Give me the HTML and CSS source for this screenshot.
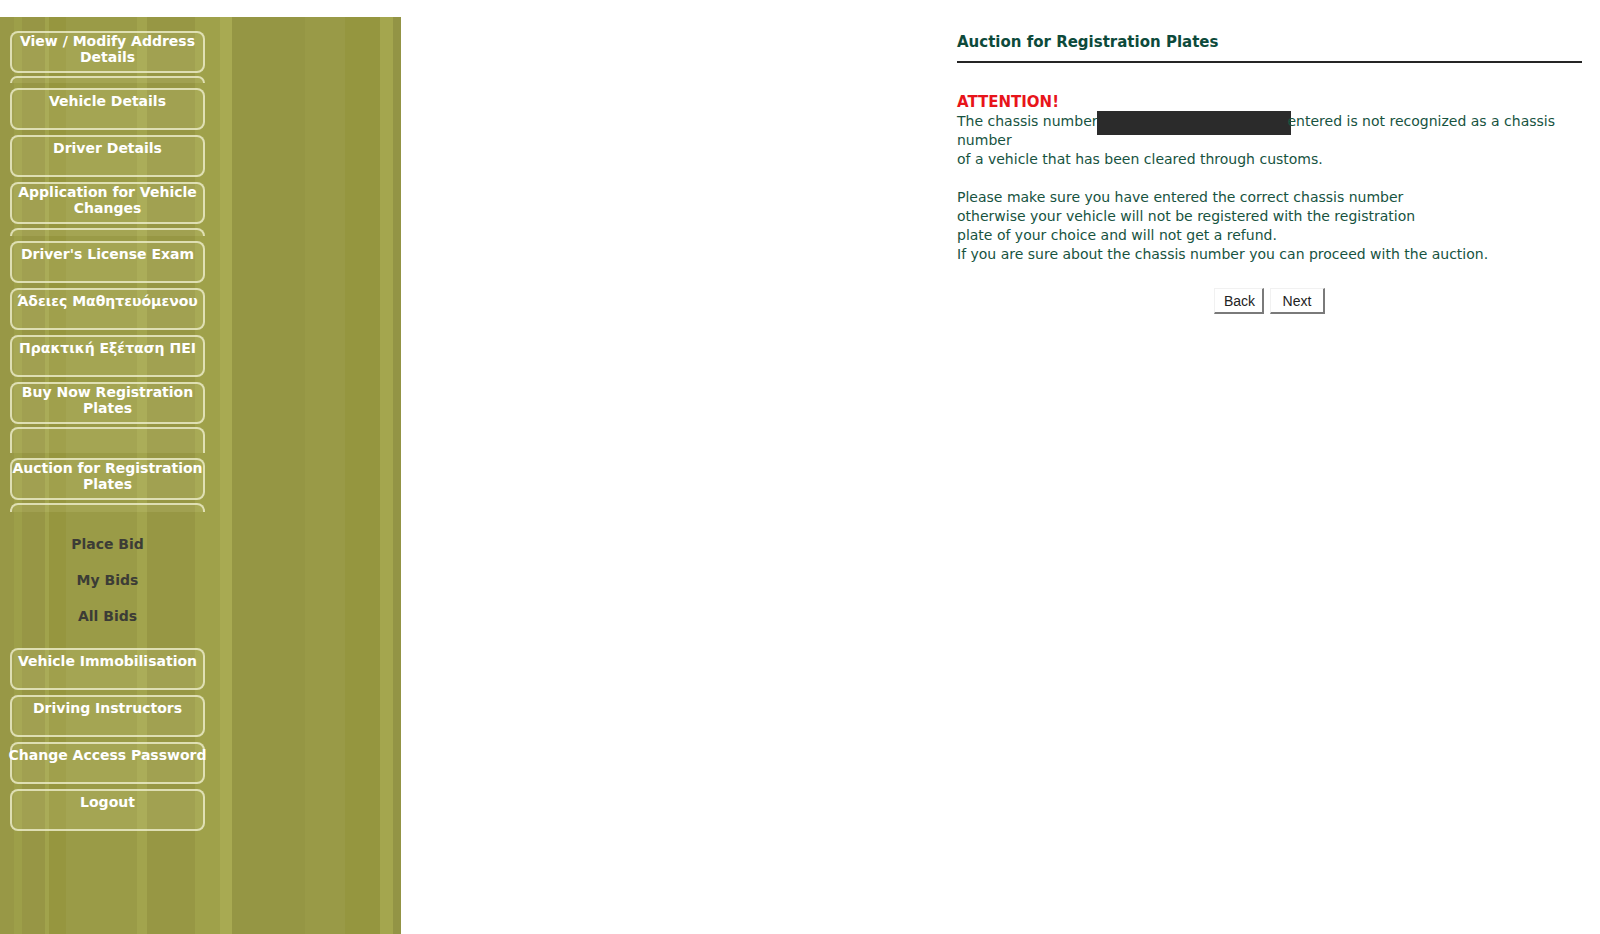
FILE: index.html
```html
<!DOCTYPE html>
<html lang="en">
<head>
<meta charset="utf-8">
<title>Auction for Registration Plates</title>
<link rel="stylesheet" href="styles.css">
</head>
<body>
<div class="page">
  <nav class="sidebar">
    <a class="nav-btn two" href="#">View / Modify Address<br>Details</a>
    <div class="stub s7"></div>
    <a class="nav-btn" href="#">Vehicle Details</a>
    <a class="nav-btn" href="#">Driver Details</a>
    <a class="nav-btn two" href="#">Application for Vehicle<br>Changes</a>
    <div class="stub s8"></div>
    <a class="nav-btn" href="#">Driver's License Exam</a>
    <a class="nav-btn" href="#">Άδειες Μαθητευόμενου</a>
    <a class="nav-btn" href="#">Πρακτική Εξέταση ΠΕΙ</a>
    <a class="nav-btn two" href="#">Buy Now Registration<br>Plates</a>
    <div class="stub s26"></div>
    <a class="nav-btn two" href="#">Auction for Registration<br>Plates</a>
    <div class="stub s9"></div>
    <div class="sublinks">
      <a class="sublink" href="#">Place Bid</a>
      <a class="sublink" href="#">My Bids</a>
      <a class="sublink" href="#">All Bids</a>
    </div>
    <a class="nav-btn" href="#">Vehicle Immobilisation</a>
    <a class="nav-btn" href="#">Driving Instructors</a>
    <a class="nav-btn" href="#">Change Access Password</a>
    <a class="nav-btn" href="#">Logout</a>
  </nav>
  <main class="main">
    <section class="content">
      <h1 class="title">Auction for Registration Plates</h1>
      <div class="notice">
        <div class="attention">ATTENTION!</div>
        <p class="msg">The chassis number<span class="redact"></span>entered is not recognized as a chassis number<br>of a vehicle that has been cleared through customs.</p>
        <p class="msg last">Please make sure you have entered the correct chassis number<br>otherwise your vehicle will not be registered with the registration<br>plate of your choice and will not get a refund.<br>If you are sure about the chassis number you can proceed with the auction.</p>
      </div>
      <div class="actions">
        <button class="btn back" type="button">Back</button>
        <button class="btn next" type="button">Next</button>
      </div>
    </section>
  </main>
</div>
</body>
</html>
```

FILE: styles.css
```css
html, body {
  margin: 0;
  padding: 0;
  background: #ffffff;
}

.page {
  display: flex;
  align-items: flex-start;
  min-height: 934px;
}

.sidebar {
  width: 401px;
  flex: 0 0 401px;
  margin-top: 17px;
  padding-top: 14px;
  box-sizing: border-box;
  min-height: 917px;
  display: flex;
  flex-direction: column;
  align-items: flex-start;
  background: linear-gradient(to right,
    #989846 0px, #989846 14px,
    #9d9f49 14px, #9d9f49 22px,
    #979645 22px, #979645 45px,
    #a1a34c 45px, #a1a34c 49px,
    #96963f 49px, #96963f 66px,
    #9a9b47 66px, #9a9b47 137px,
    #a2a44d 137px, #a2a44d 147px,
    #979744 147px, #979744 195px,
    #9fa14a 195px, #9fa14a 220px,
    #a8aa52 220px, #a8aa52 232px,
    #959644 232px, #959644 305px,
    #999a47 305px, #999a47 345px,
    #95963f 345px, #95963f 380px,
    #a4a64e 380px, #a4a64e 393px,
    #939445 393px, #939445 401px);
}

.nav-btn {
  box-sizing: border-box;
  width: 195px;
  height: 42px;
  margin: 0 0 5px 10px;
  padding-top: 3px;
  border: 2px solid rgba(238, 238, 204, 0.8);
  border-radius: 8px;
  background: rgba(255, 255, 200, 0.1);
  color: #ffffff;
  font-family: "DejaVu Sans", Verdana, sans-serif;
  font-weight: bold;
  font-size: 14px;
  line-height: 16px;
  text-align: center;
  text-decoration: none;
  white-space: nowrap;
  display: flex;
  justify-content: center;
}

.nav-btn.two {
  padding-top: 0;
}

.stub {
  box-sizing: border-box;
  width: 195px;
  margin: -2px 0 5px 10px;
  border: 2px solid rgba(238, 238, 204, 0.8);
  border-bottom: none;
  border-radius: 8px 8px 0 0;
  background: rgba(255, 255, 200, 0.1);
}

.stub.s7 { height: 7px; }
.stub.s8 { height: 8px; margin-top: -1px; }
.stub.s26 { height: 26px; }
.stub.s9 { height: 9px; margin-top: -2px; margin-bottom: 0; }

.sublinks {
  width: 195px;
  margin: 14px 0 14px 10px;
  display: flex;
  flex-direction: column;
  align-items: center;
}

.sublink {
  display: block;
  height: 36px;
  line-height: 36px;
  color: #3c3c36;
  font-family: "DejaVu Sans", Verdana, sans-serif;
  font-weight: bold;
  font-size: 14px;
  text-decoration: none;
}

.main {
  flex: 1;
  display: flex;
  justify-content: flex-end;
  padding-right: 18px;
}

.content {
  width: 625px;
  padding-top: 33px;
  font-family: "DejaVu Sans", Verdana, sans-serif;
  color: #17533f;
}

.title {
  margin: 0;
  padding-bottom: 9px;
  border-bottom: 2px solid #252525;
  font-size: 15px;
  line-height: 19px;
  font-weight: bold;
  color: #0d4a3b;
}

.notice {
  margin-top: 30px;
}

.attention {
  color: #e8141a;
  font-weight: bold;
  font-size: 15px;
  line-height: 19px;
}

.msg {
  margin: 0 0 19px 0;
  font-size: 14px;
  line-height: 19px;
}

.msg.last {
  margin-bottom: 0;
}

.redact {
  display: inline-block;
  width: 194px;
  height: 24px;
  margin: -10px -3px -9px -1px;
  background: #2b2b2b;
}

.actions {
  display: flex;
  justify-content: center;
  gap: 6px;
  margin-top: 24px;
}

.btn {
  box-sizing: border-box;
  height: 26px;
  padding: 0 9px;
  background: #ffffff;
  border: none;
  border-right: 2px solid #7a7a7a;
  border-bottom: 2px solid #7a7a7a;
  border-top: 1px solid #f1f1f1;
  border-left: 1px solid #f1f1f1;
  font-family: "Liberation Sans", Arial, sans-serif;
  font-size: 14px;
  color: #222222;
}

.btn.back { width: 50px; }
.btn.next { width: 55px; }
```
